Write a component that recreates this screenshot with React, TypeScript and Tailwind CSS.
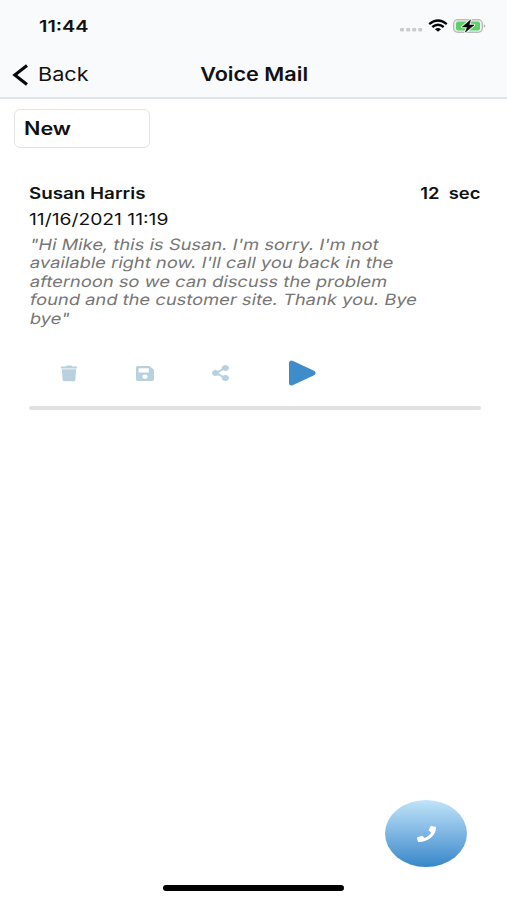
import React from "react";
import { FaPhone, FaSave, FaShareAlt } from "react-icons/fa";

const message = {
  name: "Susan Harris",
  date: "11/16/2021 11:19",
  duration: "12",
  lines: [
    `"Hi Mike, this is Susan. I'm sorry. I'm not`,
    `available right now. I'll call you back in the`,
    `afternoon so we can discuss the problem`,
    `found and the customer site. Thank you. Bye`,
    `bye"`,
  ],
};

function StatusBar() {
  return (
    <div className="flex h-[52px] items-center justify-between pl-[39px] pr-[20px]">
      <span className="inline-block origin-left scale-x-[1.24] text-[16px] font-semibold">
        11:44
      </span>
      <svg width="88" height="20" viewBox="0 0 88 20" fill="none">
        <g fill="#c9cbcd">
          <rect x="1" y="12" width="4" height="3.4" rx="0.8" />
          <rect x="7.2" y="12" width="4" height="3.4" rx="0.8" />
          <rect x="13.2" y="12" width="4" height="3.4" rx="0.8" />
          <rect x="19.2" y="12" width="4" height="3.4" rx="0.8" />
        </g>
        <g stroke="#050505" strokeWidth="2.3">
          <path d="M30.2 8.1Q39 .9 47.8 8.1" />
          <path d="M33.3 11Q39 6.4 44.7 11" />
        </g>
        <path d="M36 13.2Q39 11 42 13.2L39 15.8Z" fill="#050505" />
        <rect x="54.7" y="3.7" width="28.6" height="12.6" rx="4" fill="#f1f6f1" stroke="#b9bdba" strokeWidth="1.4" />
        <rect x="57" y="5.4" width="24" height="9.2" rx="2" fill="#5fd069" />
        <path d="M84.8 8.2Q88 10 84.8 11.8Z" fill="#aeb1af" />
        <path d="M71.5 4 63.4 10.9H68.4L66.4 16 75 9.1H70Z" fill="#050505" stroke="#edf8ee" strokeWidth="2.6" strokeLinejoin="round" />
        <path d="M71.5 4 63.4 10.9H68.4L66.4 16 75 9.1H70Z" fill="#050505" stroke="#050505" strokeWidth="0.6" strokeLinejoin="round" />
      </svg>
    </div>
  );
}

function NavBar() {
  return (
    <div className="grid h-[46px] grid-cols-[1fr_auto_1fr] items-center pl-[12px] pr-[10px]">
      <button className="flex items-center">
        <svg width="17" height="22" viewBox="0 0 17 22" fill="none">
          <path d="M15 1.5 2.8 11 15 20.5" stroke="#080808" strokeWidth="3.1" />
        </svg>
        <span className="ml-[9px] inline-block origin-left scale-x-[1.17] text-[18.5px]">
          Back
        </span>
      </button>
      <h1 className="scale-x-[1.17] text-[18.5px] font-semibold">Voice Mail</h1>
    </div>
  );
}

function TrashIcon() {
  return (
    <svg width="18" height="17" viewBox="0 0 18 17" fill="currentColor" className="ml-[31px]">
      <path d="M1.6 1.5H5.5Q6.2.6 7.2.6H10.8Q11.8.6 12.5 1.5H16.4Q17 1.5 17 2.1V3.4H1V2.1Q1 1.5 1.6 1.5Z" />
      <path d="M1.9 4.2H16.1L15.4 14.8Q15.3 16.2 13.9 16.2H4.1Q2.7 16.2 2.6 14.8Z" />
    </svg>
  );
}

function Actions() {
  return (
    <div className="flex h-[30px] items-center text-[#b9d0df]">
      <TrashIcon />
      <FaSave preserveAspectRatio="none" className="ml-[58px] h-[17px] w-[18px]" />
      <FaShareAlt preserveAspectRatio="none" className="ml-[58px] h-[16px] w-[17px]" />
      <svg width="28" height="26" viewBox="0 0 28 26" className="ml-[60px]">
        <path d="M2.5 3V23L24 13Z" fill="#3e8cca" stroke="#3e8cca" strokeWidth="5" strokeLinejoin="round" />
      </svg>
    </div>
  );
}

function VoiceMessage() {
  return (
    <article className="ml-[29px] mr-[26px] mt-[34px]">
      <div className="flex h-[22px] items-center justify-between text-[16px] font-semibold">
        <span className="inline-block origin-left scale-x-[1.175]">{message.name}</span>
        <span className="mr-px inline-block origin-right scale-x-[1.15] whitespace-pre">
          {message.duration}  sec
        </span>
      </div>
      <div className="mt-[3px] h-[24px] text-[16px] leading-[24px]">
        <span className="inline-block origin-left scale-x-[1.205]">{message.date}</span>
      </div>
      <p className="mt-[5px] whitespace-nowrap text-[15.5px] leading-[18.4px] text-[#777]">
        {message.lines.map((line) => (
          <span key={line} className="block origin-[0_75%] scale-x-[1.183] -skew-x-[10deg]">
            {line}
          </span>
        ))}
      </p>
      <div className="mt-[30px]">
        <Actions />
      </div>
      <div className="mt-[18px] h-[4px] rounded-full bg-[#e1e1e1]" />
    </article>
  );
}

export default function App() {
  return (
    <div className="flex h-[900px] w-[507px] flex-col overflow-hidden bg-white font-['Inter','Liberation_Sans',sans-serif] text-[#111]">
      <header className="h-[99px] border-b-2 border-[#e2e4e6] bg-[#f9fafc]">
        <StatusBar />
        <NavBar />
      </header>
      <div className="ml-[14px] mt-[10px] flex h-[39px] w-[136px] items-center rounded-[6px] border border-[#e3e3e3] pl-[9px]">
        <span className="inline-block origin-left scale-x-[1.2] text-[18px] font-semibold">New</span>
      </div>
      <VoiceMessage />
      <footer className="mt-auto flex flex-col">
        <button className="mr-[40px] flex h-[67px] w-[82px] items-center justify-center self-end rounded-[50%] bg-linear-to-b from-[#c1e4f9] to-[#3587c9] text-white">
          <FaPhone preserveAspectRatio="none" className="h-[16px] w-[19px]" />
        </button>
        <div className="mb-[9px] mt-[18px] h-[6px] w-[181px] self-center rounded-full bg-black" />
      </footer>
    </div>
  );
}
